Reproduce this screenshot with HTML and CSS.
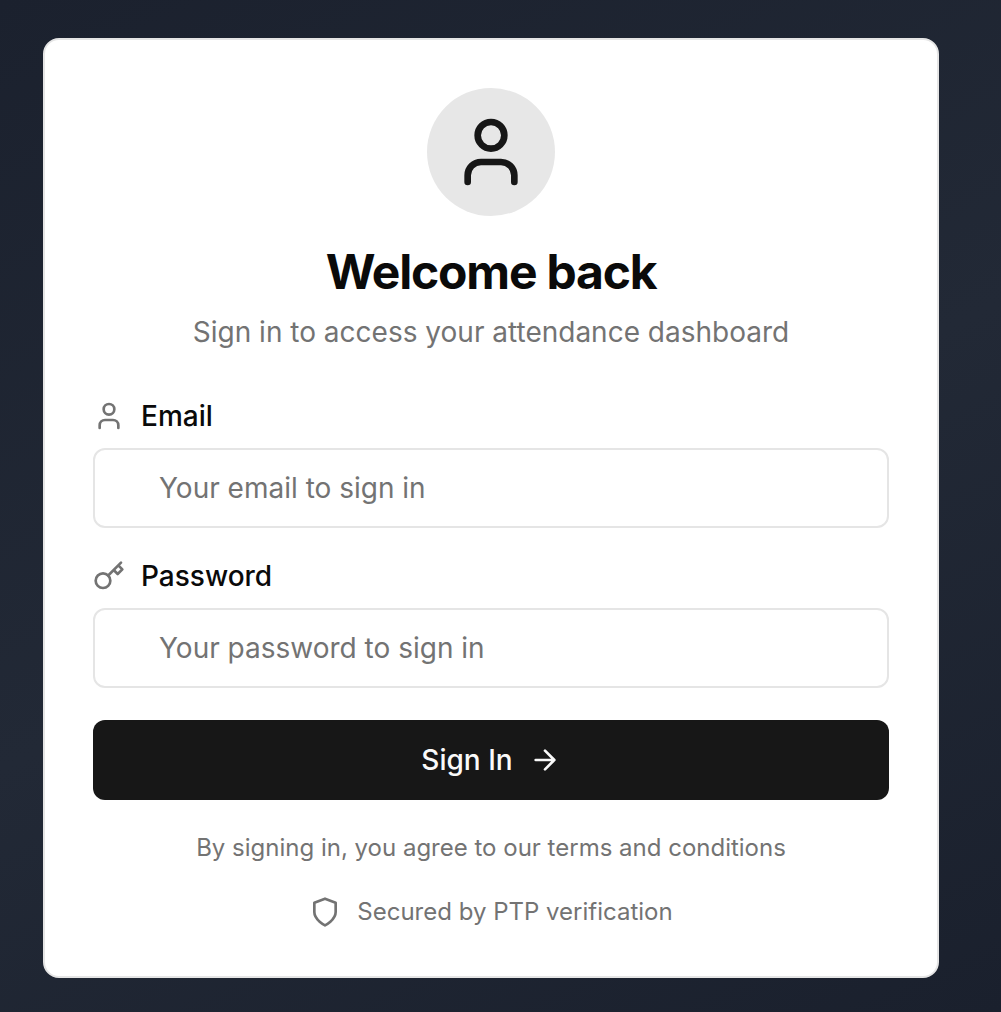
FILE: index.html
```html
<!DOCTYPE html>
<html lang="en">
<head>
<meta charset="utf-8">
<title>Sign in</title>
<link rel="stylesheet" href="styles.css">
</head>
<body>
<main class="card">
  <header class="intro">
    <div class="avatar">
      <svg class="icon icon-lg" viewBox="0 0 24 24"><path d="M19 21v-2a4 4 0 0 0-4-4H9a4 4 0 0 0-4 4v2"/><circle cx="12" cy="7" r="4"/></svg>
    </div>
    <h1 class="title">Welcome back</h1>
    <p class="subtitle">Sign in to access your attendance dashboard</p>
  </header>
  <form class="form">
    <div class="field">
      <label class="label" for="email">
        <svg class="icon" viewBox="0 0 24 24"><path d="M19 21v-2a4 4 0 0 0-4-4H9a4 4 0 0 0-4 4v2"/><circle cx="12" cy="7" r="4"/></svg>
        <span>Email</span>
      </label>
      <input class="input" id="email" type="email" placeholder="Your email to sign in">
    </div>
    <div class="field">
      <label class="label" for="password">
        <svg class="icon" viewBox="0 0 24 24"><circle cx="7.5" cy="15.5" r="5.5"/><path d="m21 2-9.6 9.6M15.5 7.5l3 3L22 7l-3-3"/></svg>
        <span>Password</span>
      </label>
      <input class="input" id="password" type="password" placeholder="Your password to sign in">
    </div>
    <button class="button" type="button">
      <span>Sign In</span>
      <svg class="icon" viewBox="0 0 24 24"><path d="M5 12h14M12 5l7 7-7 7"/></svg>
    </button>
  </form>
  <footer class="notes">
    <p class="terms">By signing in, you agree to our terms and conditions</p>
    <p class="secured">
      <svg class="icon" viewBox="0 0 24 24"><path d="M12 22s8-4 8-10V5l-8-3-8 3v7c0 6 8 10 8 10"/></svg>
      <span>Secured by PTP verification</span>
    </p>
  </footer>
</main>
</body>
</html>
```
FILE: styles.css
```css
* {
  box-sizing: border-box;
  margin: 0;
}

body {
  height: 1012px;
  padding: 38px 62px 34px 43px;
  overflow: hidden;
  background: linear-gradient(155deg, #1b212e 0%, #222936 52%, #1a202d 100%);
  color: #0a0a0a;
  font-family: Inter, "Liberation Sans", sans-serif;
}

.card {
  height: 940px;
  padding: 48px;
  border: 2px solid #e5e5e5;
  border-radius: 16px;
  background: #fff;
}

.icon {
  width: 32px;
  height: 32px;
  flex: none;
  fill: none;
  stroke: currentColor;
  stroke-width: 2;
  stroke-linecap: round;
  stroke-linejoin: round;
}

.icon-lg {
  width: 80px;
  height: 80px;
}

.intro {
  display: flex;
  flex-direction: column;
  align-items: center;
}

.avatar {
  display: grid;
  place-items: center;
  width: 128px;
  height: 128px;
  border-radius: 50%;
  background: #e7e7e7;
  color: #171717;
}

.title {
  margin-top: 24px;
  font-size: 48px;
  line-height: 64px;
  font-weight: 700;
  letter-spacing: -1.2px;
}

.subtitle {
  margin-top: 8px;
  color: #737373;
  font-size: 28px;
  line-height: 40px;
}

.form {
  display: grid;
  gap: 32px;
  margin-top: 48px;
}

.field {
  display: grid;
  gap: 16px;
}

.label {
  display: flex;
  align-items: center;
  gap: 16px;
  height: 32px;
  font-size: 28px;
  font-weight: 500;
}

.label .icon {
  color: #737373;
}

.input {
  width: 100%;
  height: 80px;
  padding: 0 24px 0 64px;
  border: 2px solid #e5e5e5;
  border-radius: 12px;
  background: transparent;
  font: 400 28px/40px Inter, "Liberation Sans", sans-serif;
}

.input::placeholder {
  color: #737373;
}

.button {
  display: flex;
  align-items: center;
  justify-content: center;
  gap: 16px;
  height: 80px;
  border: 0;
  border-radius: 12px;
  background: #171717;
  color: #fafafa;
  font: 500 28px/40px Inter, "Liberation Sans", sans-serif;
}

.notes {
  margin-top: 32px;
  color: #737373;
  font-size: 24px;
  line-height: 32px;
  text-align: center;
}

.secured {
  display: flex;
  justify-content: center;
  gap: 16px;
  margin-top: 32px;
}
```
